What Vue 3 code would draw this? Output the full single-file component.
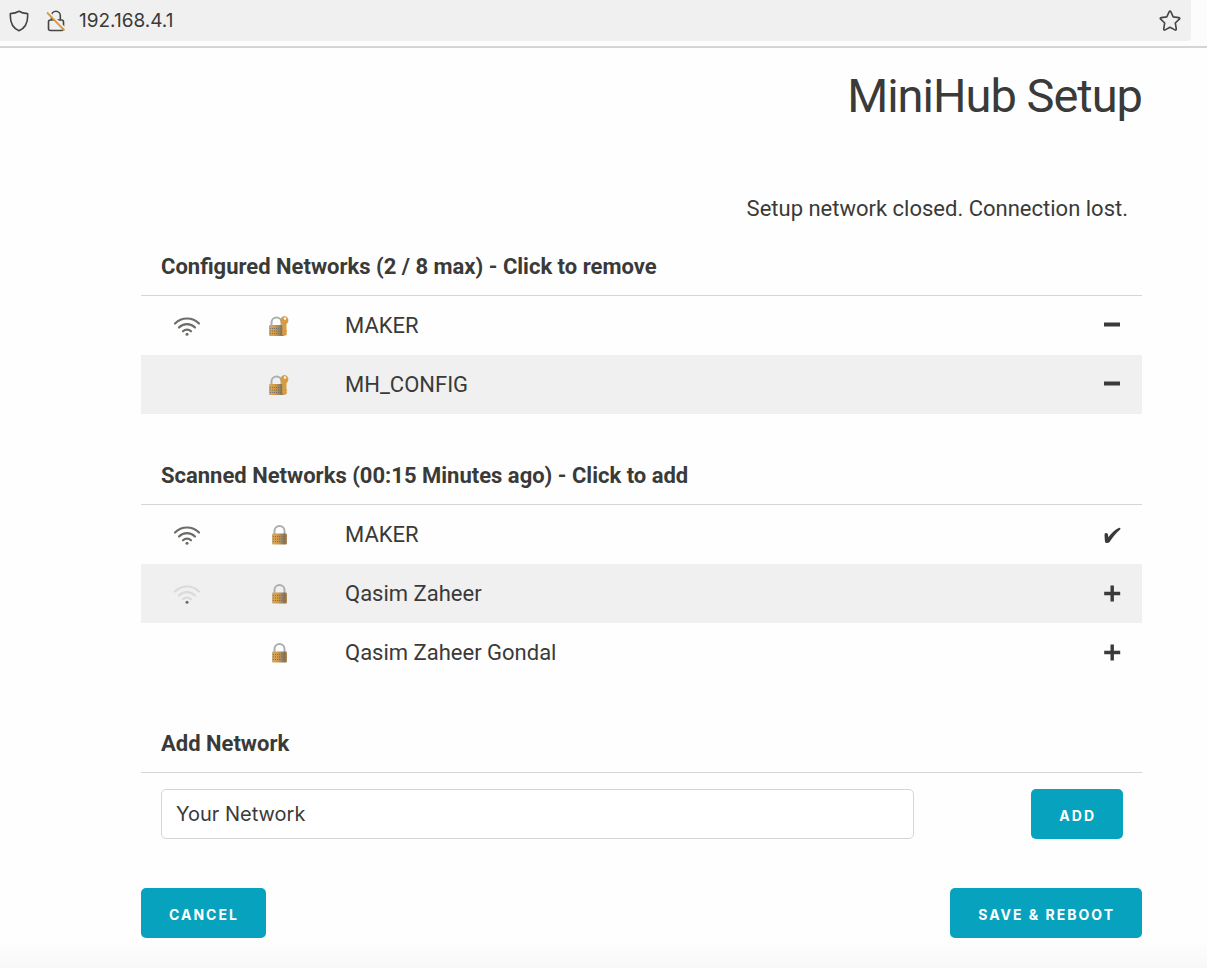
<script setup>
import { ref } from 'vue'

const address = ref('192.168.4.1')
const newNetwork = ref('Your Network')

const sections = [
  {
    title: 'Configured Networks (2 / 8 max) - Click to remove',
    rows: [
      { name: 'MAKER', signal: 'strong', lock: 'key', action: 'remove' },
      { name: 'MH_CONFIG', signal: null, lock: 'key', action: 'remove' }
    ]
  },
  {
    title: 'Scanned Networks (00:15 Minutes ago) - Click to add',
    rows: [
      { name: 'MAKER', signal: 'strong', lock: 'plain', action: 'added' },
      { name: 'Qasim Zaheer', signal: 'weak', lock: 'plain', action: 'add' },
      { name: 'Qasim Zaheer Gondal', signal: null, lock: 'plain', action: 'add' }
    ]
  }
]
</script>

<template>
  <div class="page">
    <header class="browser-bar">
      <div class="address-bar">
        <svg class="shield" width="20" height="22" viewBox="0 0 20 22" aria-hidden="true">
          <path d="M10 1.2C7.600 2.700 4.200 3.400 1.400 3.600C0.900 10.500 2.600 17.600 10 20.800C17.400 17.600 19.100 10.500 18.600 3.600C15.800 3.400 12.400 2.700 10 1.200Z" />
        </svg>
        <svg class="insecure" width="20" height="22" viewBox="0 0 20 22" aria-hidden="true">
          <path d="M5.500 9.500V5.600A4.400 4.400 0 0 1 14.300 5.600V9.500M4.500 10H15.500Q17.500 10 17.500 12V18.500Q17.500 20.500 15.500 20.500H4.500Q2.500 20.500 2.500 18.500V12Q2.500 10 4.500 10Z" />
          <path class="halo" d="M2 1.500L19.500 19" />
          <path class="slash" d="M1 2.500L18.500 20.500" />
        </svg>
        <input v-model="address" class="address" type="text" aria-label="Address" />
        <button class="bookmark" type="button" aria-label="Bookmark">
          <svg width="22" height="22" viewBox="0 0 22 22" aria-hidden="true">
            <path d="M10.100 1.800Q11 0.300 11.900 1.800L14.200 6.900L19.800 7.600Q21.500 7.900 20.300 9.200L16.300 13L17.300 18.800Q17.400 20.600 15.900 19.900L11 17.200L6.100 19.900Q4.600 20.600 4.700 18.800L5.700 13L1.700 9.200Q0.500 7.900 2.200 7.600L7.800 6.900Z" />
          </svg>
        </button>
      </div>
    </header>

    <main class="content">
      <h1>MiniHub Setup</h1>
      <p class="status">Setup network closed. Connection lost.</p>

      <table v-for="section in sections" :key="section.title" class="networks">
        <colgroup>
          <col class="icon-column" />
          <col class="icon-column" />
          <col />
          <col class="action-column" />
        </colgroup>
        <thead>
          <tr>
            <th colspan="4" scope="colgroup">{{ section.title }}</th>
          </tr>
        </thead>
        <tbody>
          <tr v-for="row in section.rows" :key="row.name">
            <td class="signal">
              <svg v-if="row.signal" :class="row.signal" width="28" height="20" viewBox="0 0 28 20" aria-hidden="true">
                <path d="M2 7.500C8.500 0.800 19.500 0.800 26 7.500" />
                <path d="M6 11.500C10.500 7 17.500 7 22 11.500" />
                <path d="M10 15.300C12.300 13 15.700 13 18 15.300" />
                <circle cx="14" cy="18.300" r="1.500" />
              </svg>
            </td>
            <td class="security">
              <svg width="24" height="22" viewBox="0 0 24 22" aria-hidden="true">
                <defs>
                  <linearGradient id="brass" x1="0" x2="1">
                    <stop offset="0" stop-color="#c9ab7c" />
                    <stop offset="0.350" stop-color="#d99b42" />
                    <stop offset="0.600" stop-color="#a98b5c" />
                    <stop offset="0.850" stop-color="#77746a" />
                    <stop offset="1" stop-color="#c58b3e" />
                  </linearGradient>
                </defs>
                <g v-if="row.lock === 'key'">
                  <path class="shackle" d="M4.500 11V7.500A5 5 0 0 1 14.500 7.500V11" />
                  <rect x="2" y="10" width="15.500" height="11" rx="1" fill="url(#brass)" />
                  <path class="ridges" d="M3 13.500H16M3 16H16M3 18.500H16" />
                  <path class="key" fill-rule="evenodd" d="M18 1A4.600 4.600 0 0 0 15.200 9.200V20.500H19L20 19L19.500 17.500L20 16L19.500 14.500V9.200A4.600 4.600 0 0 0 18 1ZM18 2.300A1.300 1.300 0 1 1 18 4.900A1.300 1.300 0 1 1 18 2.300Z" />
                </g>
                <g v-else>
                  <path class="shackle" d="M7.500 11V7A5 5 0 0 1 17.500 7V11" />
                  <rect x="5" y="9.500" width="15" height="11" rx="1" fill="url(#brass)" />
                  <path class="ridges" d="M6 12.500H19M6 15H19M6 17.500H19" />
                </g>
              </svg>
            </td>
            <td class="name">{{ row.name }}</td>
            <td class="action">
              <button type="button" :aria-label="row.action + ' ' + row.name">
                <svg width="20" height="20" viewBox="0 0 20 20" aria-hidden="true">
                  <path v-if="row.action === 'remove'" d="M2 6.500H18V10.500H2Z" />
                  <path v-else-if="row.action === 'add'" d="M8.500 1.500H11.900V7.800H18.200V11.200H11.900V17.500H8.500V11.200H2.200V7.800H8.500Z" />
                  <path v-else d="M2.500 10Q2.200 8.200 4 8Q5.800 7.900 6 9.500L6.300 12.200C9.500 8 13.200 4.500 17.300 2.800Q19.200 2.700 18.200 4.600C14 8.200 10.800 12.300 7.600 17.100Q6.400 18.300 4.300 18Q3 17.800 2.900 16Z" />
                </svg>
              </button>
            </td>
          </tr>
        </tbody>
      </table>

      <section>
        <h2><label for="network">Add Network</label></h2>
        <form class="add-form" @submit.prevent>
          <input id="network" v-model="newNetwork" type="text" />
          <button class="primary" type="submit">ADD</button>
        </form>
      </section>

      <div class="buttons">
        <button class="primary" type="button">CANCEL</button>
        <button class="primary" type="button">SAVE &amp; REBOOT</button>
      </div>
    </main>
  </div>
</template>

<style>
body {
  margin: 0;
}
</style>

<style scoped>
* {
  box-sizing: border-box;
}

.page {
  min-height: 100vh;
  background: linear-gradient(to top, #f8f8f8, #fefefe 28px);
  color: #3a3a38;
  font-family: Roboto, "Open Sans", sans-serif;
  font-size: 22px;
  line-height: 35px;
}

.browser-bar {
  padding: 0 16px 5px 0;
  border-bottom: 2px solid #d3d6d5;
  background: #fcfcfc;
}

.address-bar {
  display: flex;
  align-items: center;
  height: 41px;
  padding: 0 10px 0 9px;
  border-radius: 0 0 4px 0;
  background: #f0f0f0;
}

.address-bar svg {
  flex: none;
  fill: none;
  stroke: #454542;
  stroke-width: 1.6;
  stroke-linejoin: round;
}

.insecure {
  margin-left: 17px;
}

.address-bar .halo {
  stroke: #f0f0f0;
  stroke-width: 2;
}

.address-bar .slash {
  stroke: #dc9b40;
  stroke-width: 1.8;
}

.address {
  flex: 1;
  min-width: 0;
  margin-left: 13px;
  padding: 0;
  border: 0;
  background: transparent;
  color: inherit;
  font: 19px/24px Inter, sans-serif;
}

.bookmark {
  display: flex;
  padding: 0;
  border: 0;
  background: transparent;
}

.content {
  padding: 17px 65px 30px 141px;
}

h1 {
  margin: 0;
  font-size: 47px;
  font-weight: 400;
  line-height: 62px;
  letter-spacing: -1px;
  text-align: right;
}

.status {
  margin: 64px 14px 10px;
  text-align: right;
}

.networks {
  width: 100%;
  margin-bottom: 31px;
  border-spacing: 0;
  table-layout: fixed;
}

.icon-column {
  width: 92px;
}

.action-column {
  width: 60px;
}

th,
h2 {
  margin: 0;
  padding: 13px 20px 11px;
  border-bottom: 1px solid #d6d6d6;
  font-size: 22px;
  font-weight: 700;
  text-align: left;
}

td {
  height: 59px;
  padding: 0;
}

tbody tr:nth-child(even) {
  background: #f0f0f0;
}

td svg {
  display: block;
  margin: 0 auto;
}

.signal path {
  fill: none;
  stroke: #6c6c68;
  stroke-width: 2.2;
  stroke-linecap: round;
}

.signal circle {
  fill: #6c6c68;
}

.signal .weak path {
  stroke: #d9dbda;
}

.shackle {
  fill: none;
  stroke: #a9afad;
  stroke-width: 2;
}

.ridges {
  fill: none;
  stroke: #7d735f;
  stroke-width: 1;
  stroke-dasharray: 1 1;
}

.key {
  fill: #d99b42;
}

.name {
  padding-left: 20px;
}

.action button {
  display: flex;
  margin-left: 20px;
  padding: 0;
  border: 0;
  background: transparent;
}

.action path {
  fill: #3a3a38;
}

.add-form {
  display: flex;
  gap: 117px;
  padding: 16px 19px 0 20px;
}

#network {
  flex: 1;
  min-width: 0;
  height: 50px;
  padding: 0 14px;
  border: 1px solid #d3d6d5;
  border-radius: 5px;
  background: #ffffff;
  color: inherit;
  font: 20px/28px Inter, sans-serif;
}

.primary {
  height: 50px;
  padding: 3px 27px 0 28px;
  border: 0;
  border-radius: 5px;
  background: #07a2bd;
  color: #ffffff;
  font: 700 14px/20px Inter, sans-serif;
  letter-spacing: 2px;
}

.buttons {
  display: flex;
  justify-content: space-between;
  margin-top: 49px;
}
</style>
